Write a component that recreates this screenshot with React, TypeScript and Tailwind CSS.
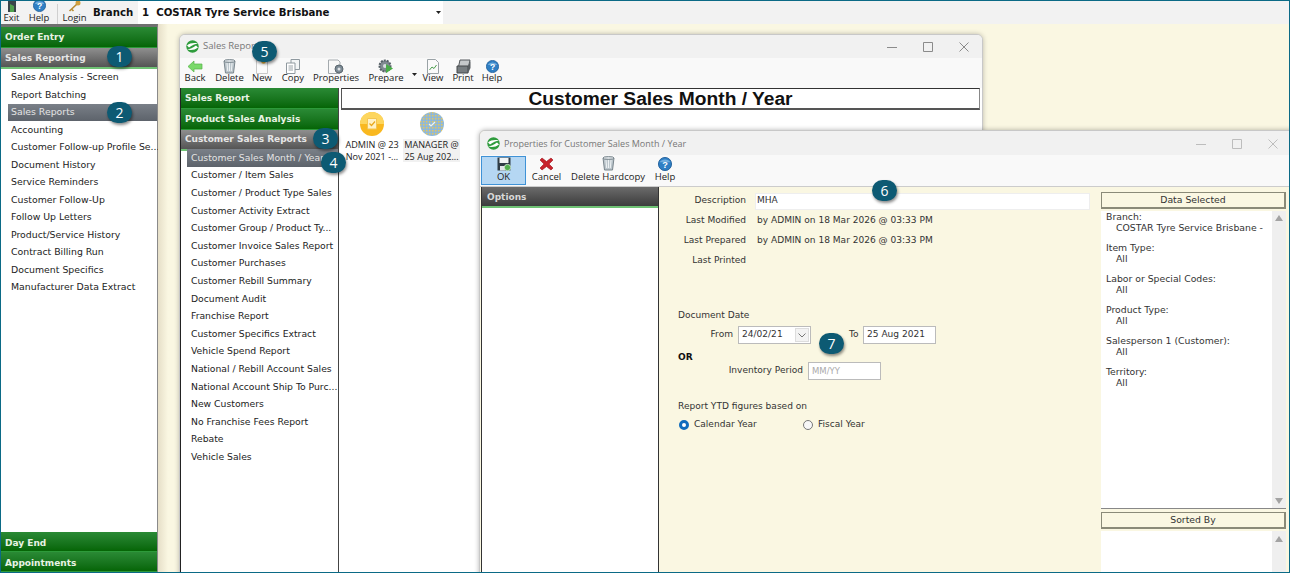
import React from "react";

const font = { fontFamily: '"DejaVu Sans", Verdana, sans-serif' };
const seg = { fontFamily: '"Open Sans", "DejaVu Sans", sans-serif' };

const GH = ({ children, h = "h-[21px]", cls = "" }: { children: React.ReactNode; h?: string; cls?: string }) => (
  <div className={`${h} ${cls} flex items-center pl-[4px] shrink-0 bg-gradient-to-b from-[#2a8a35] to-[#056505] border-b border-[#2d9a3a] text-[#e8f3e4] font-bold text-[9px]`}>
    {children}
  </div>
);
const GrayH = ({ children, h = "h-[21px]", cls = "" }: { children: React.ReactNode; h?: string; cls?: string }) => (
  <div className={`${h} ${cls} flex items-center pl-[4px] shrink-0 bg-gradient-to-b from-[#8f8f8f] to-[#555555] border-b-2 border-[#6fc274] text-[#e6e6e6] font-bold text-[9px]`}>
    {children}
  </div>
);

const Badge = ({ n, x, y }: { n: number; x: number; y: number }) => (
  <div
    className="absolute w-[25px] h-[21px] rounded-full bg-[#0d5a73] text-white flex items-center justify-center text-[14px] shadow-[1px_2px_3px_rgba(0,0,0,0.45)] z-50"
    style={{ left: x - 13, top: y - 11, fontFamily: '"Open Sans", sans-serif' }}
  >
    {n}
  </div>
);

const TI = ({ label, children, w, ml = 0, active, box = "h-[15px] -mb-[3px]" }: { label: string; children: React.ReactNode; w?: number; ml?: number; active?: boolean; box?: string }) => (
  <div
    className={`flex flex-col items-center justify-end shrink-0 h-full ${active ? "bg-[#b5d7f3] border border-[#3f92d6] pb-[1px]" : ""}`}
    style={{ width: w, marginLeft: ml }}
  >
    <div className={`${box} flex items-center justify-center`}>{children}</div>
    <div className="text-[9.5px] leading-[13px] text-[#222] whitespace-nowrap">{label}</div>
  </div>
);

const HelpI = ({ s = 15 }: { s?: number }) => (
  <svg width={s} height={s} viewBox="0 0 16 16">
    <circle cx="8" cy="8" r="7.5" fill="#2f7fc4" stroke="#1d5c98" />
    <path d="M2 6a6.5 5 0 0 1 12 0z" fill="#8cc0ea" opacity=".7" />
    <text x="8" y="12" fontSize="10.5" fontWeight="700" fill="#fff" textAnchor="middle" fontFamily="Liberation Sans">?</text>
  </svg>
);
const BackI = () => (
  <svg width="16" height="13" viewBox="0 0 16 13">
    <path d="M1 6.5 7 1v3h8v5H7v3z" fill="#7ad96a" stroke="#58b348" strokeWidth=".7" />
  </svg>
);
const TrashI = () => (
  <svg width="13" height="15" viewBox="0 0 13 15">
    <path d="M1 2h11l-1.5 12h-8z" fill="#bcc6cc" stroke="#79858c" />
    <ellipse cx="6.5" cy="2" rx="5.5" ry="1.4" fill="#dfe5e8" stroke="#79858c" />
    <path d="M4 4l.7 8M6.5 4v8M9 4l-.7 8" stroke="#eef2f4" />
  </svg>
);
const DocI = () => (
  <svg width="12" height="15" viewBox="0 0 12 15">
    <path d="M.5 1h11v13.5H.5z" fill="#fbfbfb" stroke="#c9c9c9" />
    <circle cx="7.5" cy="2.5" r="2.3" fill="#e8b23c" />
  </svg>
);
const CopyI = () => (
  <svg width="14" height="15" viewBox="0 0 14 15">
    <path d="M5 .5h8.5v10H5z" fill="#f3f5f6" stroke="#8f999f" />
    <path d="M.5 4h8.5v10.5H.5z" fill="#fff" stroke="#8f999f" />
    <path d="M2.5 7h4.5M2.5 9h4.5M2.5 11h4.5" stroke="#9aa3a8" />
  </svg>
);
const PropsI = () => (
  <svg width="16" height="15" viewBox="0 0 16 15">
    <path d="M.5 1h9.5l2 2v11.5H.5z" fill="#f8f8f8" stroke="#a4aaae" />
    <circle cx="11" cy="10" r="4" fill="#7d8b95" stroke="#5a666e" />
    <circle cx="11" cy="10" r="1.5" fill="#dfe3e6" />
  </svg>
);
const PrepI = () => (
  <svg width="16" height="15" viewBox="0 0 16 15">
    <circle cx="7" cy="7" r="5.5" fill="#7f8a90" stroke="#566066" strokeDasharray="2 1" strokeWidth="2" />
    <circle cx="7" cy="7" r="2" fill="#d9dee0" />
    <path d="M8 5l7 4.5L8 14z" fill="#48ad45" />
  </svg>
);
const ViewI = () => (
  <svg width="12" height="15" viewBox="0 0 12 15">
    <path d="M.5.5h8l3 3v11H.5z" fill="#fafafa" stroke="#9aa2a6" />
    <path d="M2.5 11l2.5-3 2 1.5 2.5-3.5" fill="none" stroke="#4b9e4d" />
  </svg>
);
const PrintI = () => (
  <svg width="15" height="15" viewBox="0 0 15 15">
    <path d="M4 1h10l-2 9H2z" fill="#c5c8ca" stroke="#54595c" />
    <path d="M1 7h11v7H1z" fill="#777d80" stroke="#44484a" />
    <path d="M12 7l2.5-5v7L12 14z" fill="#585d60" />
  </svg>
);
const SaveI = () => (
  <svg width="14" height="14" viewBox="0 0 14 14">
    <path d="M.5.5h13v13H.5z" fill="#2f3c46" />
    <path d="M2.5 1h9v5h-9z" fill="#f1f4f5" />
    <path d="M3 9h5v4.5H3z" fill="#dfe5e8" />
    <circle cx="10.5" cy="10.5" r="3.2" fill="#52b04f" stroke="#fff" strokeWidth=".6" />
  </svg>
);
const XI = () => (
  <svg width="15" height="14" viewBox="0 0 15 14">
    <path d="M1 3l2-2 4.5 3.5L12 1l2 2-4 4 4 4-2 2-4.500-3.500L3 13l-2-2 4-4z" fill="#c8232c" stroke="#9e1219" strokeWidth=".6" />
  </svg>
);
const Logo = () => (
  <svg width="13" height="13" viewBox="0 0 13 13" className="shrink-0">
    <circle cx="6.500" cy="6.500" r="6.200" fill="#2f9c3d" />
    <path d="M1 5.500C4 3 8 2.500 12 3.500 9 4 6 5 3 7.500zM12 7.500C9 10 5 10.500 1 9.500 4 9 7 8 10 5.500z" fill="#fff" />
  </svg>
);
const WinBtns = ({ gap, dim }: { gap: number; dim?: boolean }) => (
  <div className={`flex items-center ${dim ? "opacity-50" : ""}`} style={{ gap }}>
    <svg width="10" height="10" viewBox="0 0 10 10"><path d="M0 5.500h10" stroke="#8b8b8b" /></svg>
    <svg width="10" height="10" viewBox="0 0 10 10"><path d="M.5.500h9v9h-9z" fill="none" stroke="#8b8b8b" /></svg>
    <svg width="10" height="10" viewBox="0 0 10 10"><path d="M.5.500l9 9M9.500.500l-9 9" stroke="#8b8b8b" /></svg>
  </div>
);

const side = ["Sales Analysis - Screen", "Report Batching", "Sales Reports", "Accounting", "Customer Follow-up Profile Se...", "Document History", "Service Reminders", "Customer Follow-Up", "Follow Up Letters", "Product/Service History", "Contract Billing Run", "Document Specifics", "Manufacturer Data Extract"];
const sub = ["Customer Sales Month / Year", "Customer / Item Sales", "Customer / Product Type Sales", "Customer Activity Extract", "Customer Group / Product Ty...", "Customer Invoice Sales Report", "Customer Purchases", "Customer Rebill Summary", "Document Audit", "Franchise Report", "Customer Specifics Extract", "Vehicle Spend Report", "National / Rebill Account Sales", "National Account Ship To Purc...", "New Customers", "No Franchise Fees Report", "Rebate", "Vehicle Sales"];
const data: [string, string][] = [["Branch:", "COSTAR Tyre Service Brisbane -"], ["Item Type:", "All"], ["Labor or Special Codes:", "All"], ["Product Type:", "All"], ["Salesperson 1 (Customer):", "All"], ["Territory:", "All"]];

const Label = ({ children, w = 96, pr = 9 }: { children: React.ReactNode; w?: number; pr?: number }) => (
  <div className="text-right shrink-0" style={{ width: w, paddingRight: pr }}>{children}</div>
);

const Up = () => <svg width="8" height="6" viewBox="0 0 8 6"><path d="M4 0l4 6H0z" fill="#a3a3a3" /></svg>;
const Down = () => <svg width="8" height="6" viewBox="0 0 8 6"><path d="M4 6l4-6H0z" fill="#a3a3a3" /></svg>;

export default function App() {
  return (
    <div className="relative w-[1290px] h-[573px] overflow-hidden border border-[#0b6a86] bg-[#faf7e2] flex flex-col text-[#222]" style={font}>
      {/* top bar */}
      <div className="h-[23px] flex items-end shrink-0 bg-[#f2f2f2]">
        <div className="flex h-[23px] overflow-hidden items-end" style={seg}>
          <div className="w-[21px] flex flex-col items-center">
            <svg width="10" height="11" viewBox="0 0 10 11"><path d="M1 0h8v11H1z" fill="#39444a" /><path d="M3 3l4 2v6H3z" fill="#4fa14d" /></svg>
            <div className="text-[9.5px] leading-[12px]">Exit</div>
          </div>
          <div className="w-[30px] ml-[2px] flex flex-col items-center">
            <HelpI s={13} />
            <div className="text-[9.5px] leading-[12px]">Help</div>
          </div>
          <div className="w-px h-[20px] bg-[#cfcfcf] mx-[3px]" />
          <div className="w-[27px] flex flex-col items-center">
            <svg width="13" height="12" viewBox="0 0 13 12"><circle cx="10" cy="3" r="2.500" fill="#d2a03f" /><path d="M8.500 4.500 1.500 11M3.500 9l2 2" stroke="#b88a30" strokeWidth="1.600" fill="none" /></svg>
            <div className="text-[9.5px] leading-[12px]">Login</div>
          </div>
        </div>
        <div className="h-[23px] flex items-center ml-[5px] font-bold text-[10.2px] text-[#111] w-[45px]">Branch</div>
        <div className="h-[23px] w-[305px] bg-white flex items-center justify-between pl-[4px] pr-[2px] font-bold text-[10.2px] text-[#111]">
          <span className="whitespace-pre">1  COSTAR Tyre Service Brisbane</span>
          <svg width="5" height="3" viewBox="0 0 5 3"><path d="M0 0h5L2.500 3z" fill="#222" /></svg>
        </div>
      </div>

      <div className="flex flex-1 min-h-0">
        {/* sidebar */}
        <div className="w-[157px] shrink-0 flex flex-col bg-white border-r border-[#8a8a8a] border-t-[3px] border-t-[#6f6f6f]">
          <GH cls="pt-[1px]">Order Entry</GH>
          <GrayH cls="pt-[2px]">Sales Reporting</GrayH>
          <div className="flex-1 -mt-[0.5px] text-[9.35px]">
            {side.map((s) => (
              <div key={s} className={`h-[17.5px] flex items-center whitespace-nowrap ${s === "Sales Reports" ? "ml-[7px] pl-[3px] bg-gradient-to-b from-[#7a8088] to-[#5d636b] text-[#e4e4e4]" : "pl-[10px]"}`}>{s}</div>
            ))}
          </div>
          <GH h="h-[20px]" cls="pt-[4px]">Day End</GH>
          <GH h="h-[20px]" cls="pt-[4px]">Appointments</GH>
        </div>
        <div className="flex-1 bg-gradient-to-r from-[#e6dfc8] via-[#faf7e2] to-[#faf7e2] [background-size:20px_100%] bg-no-repeat" />
      </div>

      {/* Sales report window */}
      <div className="absolute left-[178px] top-[33px] w-[804px] h-[560px] bg-white rounded-t-[6px] border border-[#c8c8c8] shadow-[0_0_5px_rgba(0,0,0,0.25)] flex flex-col overflow-hidden">
        <div className="h-[23px] bg-[#f1f1f1] flex items-center pl-[6px] pr-[13px] gap-[4px] shrink-0">
          <Logo />
          <span className="text-[9.5px] text-[#777] flex-1" style={seg}>Sales Reports</span>
          <WinBtns gap={26} />
        </div>
        <div className="h-[30px] bg-[#f9f9f9] flex shrink-0 pb-[4px] pl-[3px] text-[#222]" style={seg}>
          <TI label="Back" w={24}><BackI /></TI>
          <TI label="Delete" w={33} ml={6}><TrashI /></TI>
          <TI label="New" w={22} ml={5}><DocI /></TI>
          <TI label="Copy" w={30} ml={5}><CopyI /></TI>
          <TI label="Properties" w={50} ml={3}><PropsI /></TI>
          <TI label="Prepare" w={42} ml={4}><PrepI /></TI>
          <div className="w-[10px] ml-[2px] flex items-end pb-[8px] justify-center"><svg width="5" height="3" viewBox="0 0 5 3"><path d="M0 0h5L2.500 3z" fill="#222" /></svg></div>
          <TI label="View" w={26} ml={1}><ViewI /></TI>
          <TI label="Print" w={26} ml={4}><PrintI /></TI>
          <TI label="Help" w={26} ml={3}><HelpI s={13} /></TI>
        </div>
        <div className="flex flex-1 min-h-0">
          <div className="w-[159px] shrink-0 flex flex-col border-l border-[#222] border-r border-r-[#444]">
            <GH cls="pt-[1px]">Sales Report</GH>
            <GH cls="pt-[1px]">Product Sales Analysis</GH>
            <GrayH>Customer Sales Reports</GrayH>
            <div className="text-[9.25px] -mt-[2px]">
              {sub.map((s, i) => (
                <div key={s} className={`h-[17.6px] flex items-center whitespace-nowrap ${i === 0 ? "ml-[6px] pl-[4px] bg-gradient-to-b from-[#7a8088] to-[#5d636b] text-[#e4e4e4]" : "pl-[10px]"}`}>{s}</div>
              ))}
            </div>
          </div>
          <div className="flex-1 pl-[2px] pr-[2px] flex flex-col">
            <div className="h-[22px] pt-[2px] border-2 border-[#555] border-t-[1px] border-t-[#333] border-r-[#888] border-r-[1px] border-l-[1px] flex items-center justify-center font-bold text-[19.2px] text-[#111]" style={{ fontFamily: '"Liberation Sans", sans-serif' }}>
              Customer Sales Month / Year
            </div>
            <div className="flex pt-[2px] pl-[1px] text-[9.1px] leading-[11.500px] text-center text-[#222]" style={seg}>
              <div className="w-[60px] flex flex-col items-center">
                <svg width="24" height="24" viewBox="0 0 24 24">
                  <circle cx="12" cy="12" r="12" fill="#f9b81f" />
                  <path d="M0 12a12 12 0 0 1 24 0z" fill="#fdd65e" />
                  <path d="M7.500 6.500h9v10.500h-9z" fill="#fff2c6" stroke="#f4c550" />
                  <path d="M9.500 11.500l2 2 3.500-4" fill="none" stroke="#e9a91d" strokeWidth="1.200" />
                </svg>
                <div className="whitespace-nowrap mt-[3px]">ADMIN @ 23<br />Nov 2021 -...</div>
              </div>
              <div className="w-[57px] ml-[1px] flex flex-col items-center">
                <svg width="24" height="24" viewBox="0 0 24 24">
                  <defs>
                    <pattern id="p" width="3" height="3" patternUnits="userSpaceOnUse">
                      <rect width="3" height="3" fill="#8fb8d8" />
                      <rect width="1.500" height="1.500" fill="#e3c660" />
                    </pattern>
                  </defs>
                  <circle cx="12" cy="12" r="12" fill="url(#p)" />
                  <path d="M9 12l2 2 4-4" fill="none" stroke="#e9f3f8" strokeWidth="1.200" />
                </svg>
                <div className="whitespace-nowrap mt-[3px] w-full bg-[#f1f1f1]">MANAGER @<br />25 Aug 202...</div>
              </div>
            </div>
          </div>
        </div>
      </div>

      {/* Properties window */}
      <div className="absolute left-[478px] top-[129px] w-[830px] h-[460px] bg-[#faf7e2] rounded-tl-[6px] border border-[#c8c8c8] shadow-[0_0_5px_rgba(0,0,0,0.3)] flex flex-col overflow-hidden z-10">
        <div className="h-[24px] pt-[1px] bg-[#f1f1f1] flex items-center pl-[7px] gap-[4px] shrink-0">
          <Logo />
          <span className="text-[9px] text-[#777] flex-1" style={seg}>Properties for Customer Sales Month / Year</span>
          <div className="mr-[30px]"><WinBtns gap={26} dim /></div>
        </div>
        <div className="h-[31px] bg-[#f9f9f9] flex shrink-0 pl-[1px] py-[1px]" style={seg}>
          <TI label="OK" w={45} active box="h-[13px]"><SaveI /></TI>
          <div className="flex h-full pb-[2px]">
            <TI label="Cancel" w={39} ml={1} box="h-[13px]"><XI /></TI>
            <TI label="Delete Hardcopy" w={80} ml={2} box="h-[13px]"><TrashI /></TI>
            <TI label="Help" w={30} ml={2} box="h-[13px]"><HelpI s={14} /></TI>
          </div>
        </div>
        <div className="flex flex-1 min-h-0 border-t border-[#ccc]">
          <div className="w-[178px] ml-[1px] shrink-0 flex flex-col bg-white border-l border-r border-[#333]">
            <div className="h-[21px] flex items-center pl-[5px] pt-[2px] bg-gradient-to-b from-[#6b6b6b] to-[#3d3d3d] border-b-2 border-[#6fc274] text-[#d8d8d8] font-bold text-[9px]">Options</div>
          </div>
          {/* form */}
          <div className="w-[442px] shrink-0 text-[9.05px] text-[#333] pt-[5px]">
            <div className="h-[18px] flex items-center">
              <Label>Description</Label>
              <div className="w-[335px] h-[17px] bg-white border border-[#eee] flex items-center pl-[1px]">MHA</div>
            </div>
            <div className="h-[20px] mt-[1px] flex items-center"><Label>Last Modified</Label><span className="pl-[2px]">by ADMIN on 18 Mar 2026 @ 03:33 PM</span></div>
            <div className="h-[20px] flex items-center"><Label>Last Prepared</Label><span className="pl-[2px]">by ADMIN on 18 Mar 2026 @ 03:33 PM</span></div>
            <div className="h-[19px] flex items-center"><Label>Last Printed</Label></div>
            <div className="h-[18px] mt-[37px] flex items-center pl-[19px]">Document Date</div>
            <div className="h-[20px] flex items-center">
              <Label w={79} pr={5}>From</Label>
              <div className="w-[73px] h-[18px] bg-white border border-[#bbb] flex items-center justify-between pl-[3px] pr-[1px]">
                24/02/21
                <div className="w-[14px] h-[14px] bg-[#f3f3f3] border border-[#ddd] flex items-center justify-center">
                  <svg width="8" height="5" viewBox="0 0 8 5"><path d="M.5.500 4 4 7.500.500" fill="none" stroke="#777" /></svg>
                </div>
              </div>
              <div className="ml-[38px] w-[14px]">To</div>
              <div className="w-[73px] h-[18px] bg-white border border-[#bbb] flex items-center pl-[3px]">25 Aug 2021</div>
            </div>
            <div className="h-[14px] mt-[6px] flex items-center pl-[19px] font-bold text-[#111]">OR</div>
            <div className="h-[20px] -mt-[4px] flex items-center relative">
              <Label w={149} pr={5}>Inventory Period</Label>
              <div className="w-[73px] h-[18px] bg-white border border-[#bbb] flex items-center pl-[3px] text-[#aaa] text-[8.500px]">MM/YY</div>
            </div>
            <div className="h-[16px] mt-[18px] flex items-center pl-[19px]">Report YTD figures based on</div>
            <div className="h-[20px] flex items-center pl-[20px]">
              <div className="w-[10px] h-[10px] rounded-full border-[3px] border-[#0f6cbd] bg-white" />
              <span className="ml-[5px] w-[109px]">Calendar Year</span>
              <div className="w-[10px] h-[10px] rounded-full border border-[#777] bg-[#f7f7f7]" />
              <span className="ml-[5px]">Fiscal Year</span>
            </div>
          </div>
          {/* right */}
          <div className="w-[185px] shrink-0 flex flex-col text-[9.3px] text-[#333]">
            <div className="mt-[5px] h-[17px] shrink-0 border border-[#8a8a78] border-r-2 border-b-2 flex items-center justify-center bg-[#faf7e2]">Data Selected</div>
            <div className="mt-[2px] h-[298px] bg-white flex justify-between border-b border-[#888] shrink-0">
              <div className="pl-[5px] leading-[11px]">
                {data.map(([k, v]) => (
                  <div key={k} className="mb-[9px] whitespace-nowrap">
                    <div>{k}</div>
                    <div className="pl-[10px]">{v}</div>
                  </div>
                ))}
              </div>
              <div className="w-[14px] bg-[#efefef] flex flex-col items-center justify-between py-[4px]"><Up /><Down /></div>
            </div>
            <div className="mt-[3px] h-[17px] border border-[#8a8a78] border-r-2 border-b-2 flex items-center justify-center bg-[#faf7e2] shrink-0">Sorted By</div>
            <div className="mt-[2px] flex-1 bg-white flex justify-end">
              <div className="w-[14px] bg-[#efefef] flex flex-col items-center py-[5px]"><Up /></div>
            </div>
          </div>
        </div>
      </div>

      <Badge n={1} x={119} y={56} />
      <Badge n={2} x={119} y={112} />
      <Badge n={3} x={325} y={138} />
      <Badge n={4} x={333} y={162} />
      <Badge n={5} x={264} y={51} />
      <Badge n={6} x={884} y={190} />
      <Badge n={7} x={831} y={343} />
    </div>
  );
}
